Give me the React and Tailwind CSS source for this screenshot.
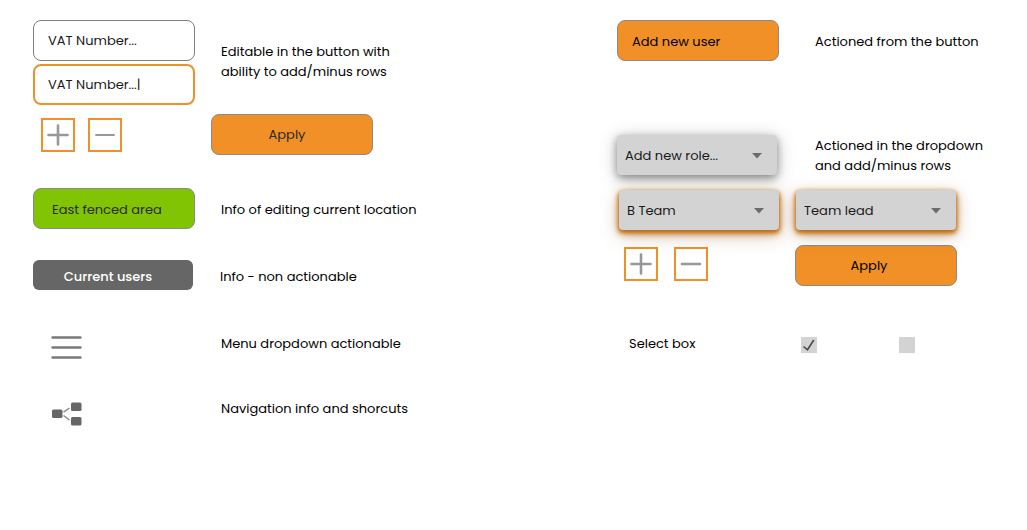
import React from "react";

const field =
  "block h-[41px] w-[162px] rounded-lg bg-white text-[13px] text-[#1a1a1a] outline-none";
const outlined =
  "h-[41px] w-[162px] shrink-0 rounded-lg border border-[#8a8a8a] text-[13px]";

function Note({ children, className = "" }) {
  return (
    <p className={"text-[13px] leading-5 text-black " + className}>{children}</p>
  );
}

function RowButton({ minus = false, thin = false }) {
  return (
    <button
      type="button"
      aria-label={minus ? "Remove row" : "Add row"}
      className="flex size-[34px] shrink-0 items-center justify-center border-2 border-[#f09026] bg-white"
    >
      <svg
        width="22"
        height="22"
        viewBox="0 0 22 22"
        stroke="#999797"
        strokeWidth={thin ? 1.8 : 2.6}
        strokeLinecap="round"
      >
        <path d={minus ? "M2 11H20" : "M1.5 11H20.5M11 1.5V20.5"} />
      </svg>
    </button>
  );
}

function Dropdown({ label, option, active = false }) {
  return (
    <div
      className={
        "relative h-10 w-40 shrink-0 rounded bg-[#d3d3d3] " +
        (active
          ? "shadow-[0_2px_4px_#b8690c,0_3px_7px_#cf7a1d,0_5px_18px_#8a5a2a66]"
          : "shadow-[0_3px_8px_#00000066,0_3px_20px_#00000033]")
      }
    >
      <select
        aria-label={label}
        className="size-full appearance-none rounded bg-transparent pt-0.5 pr-8 pl-2 text-[13px] text-[#1a1a1a] outline-none"
      >
        <option>{option}</option>
      </select>
      <svg
        className="pointer-events-none absolute top-[18px] right-[15px]"
        width="10"
        height="6"
        viewBox="0 0 10 6"
        fill="#6b6b6b"
      >
        <path d="M0 0H10L5 5.5Z" />
      </svg>
    </div>
  );
}

function CheckBox({ label, checked = false }) {
  return (
    <span className="relative block size-4">
      <input
        type="checkbox"
        aria-label={label}
        defaultChecked={checked}
        className="peer block size-4 appearance-none bg-[#d3d3d3]"
      />
      <svg
        className="pointer-events-none absolute inset-0 hidden peer-checked:block"
        width="16"
        height="16"
        viewBox="0 0 16 16"
        fill="none"
        stroke="#4a4a4a"
        strokeWidth="1.6"
      >
        <path d="M2.5 9.5L6.5 12.8L12.8 3" />
      </svg>
    </span>
  );
}

export default function App() {
  return (
    <main className="grid min-h-screen grid-cols-[584fr_377fr] bg-white px-[33px] py-5 font-['Poppins','Inter',sans-serif]">
      <section className="flex flex-col">
        <div className="flex items-center gap-[26px]">
          <div className="flex flex-col gap-[3px]">
            <input
              aria-label="VAT number"
              defaultValue="VAT Number..."
              className={field + " border border-[#808080] px-3.5"}
            />
            <input
              aria-label="VAT number, editing"
              defaultValue="VAT Number...|"
              className={field + " border-2 border-[#f09026] px-[13px]"}
            />
          </div>
          <Note className="pb-0.5">
            Editable in the button with
            <br />
            ability to add/minus rows
          </Note>
        </div>

        <div className="mt-[9px] flex items-center pl-2">
          <div className="flex gap-[13px]">
            <RowButton />
            <RowButton minus thin />
          </div>
          <button type="button" className={outlined + " ml-[89px] bg-[#f09026] pr-2.5 text-[#2b2b2b]"}>
            Apply
          </button>
        </div>

        <div className="mt-[33px] flex items-center gap-[26px]">
          <div className={outlined + " flex items-center bg-[#80c403] pt-0.5 pl-[18px] text-[#2b2b2b]"}>
            East fenced area
          </div>
          <Note className="pt-0.5">Info of editing current location</Note>
        </div>

        <div className="mt-[31px] flex items-center gap-[27px]">
          <div className="flex h-[30px] w-40 items-center justify-center rounded-md bg-[#666666] pt-[3px] pr-2.5 text-[13px] font-medium text-white">
            Current users
          </div>
          <Note className="pt-[3px]">Info - non actionable</Note>
        </div>

        <div className="mt-11 flex items-start">
          <div className="w-[188px] pt-0.5 pl-[18px]">
            <button type="button" aria-label="Menu" className="block">
              <svg width="31" height="24" viewBox="0 0 31 24" stroke="#7a7a7a" strokeWidth="2.4" strokeLinecap="round">
                <path d="M1.5 1.5H29.5M1.5 11.5H29.5M1.5 21.5H29.5" />
              </svg>
            </button>
          </div>
          <Note>Menu dropdown actionable</Note>
        </div>

        <div className="mt-[39px] flex items-start">
          <div className="w-[188px] pt-[3px] pl-[18px]">
            <button type="button" aria-label="Navigation" className="block">
              <svg width="31" height="24" viewBox="0 0 31 24" fill="#666666">
                <path d="M12.5 10.2L18.5 6M12.5 13.5L18.5 18" stroke="#8a8a8a" strokeWidth="1.5" />
                <rect x="1" y="7.5" width="10.5" height="8.5" rx="1.5" />
                <rect x="20" y="0.5" width="10.5" height="8.5" rx="1.5" />
                <rect x="20" y="15" width="10.5" height="8.5" rx="1.5" />
              </svg>
            </button>
          </div>
          <Note>Navigation info and shorcuts</Note>
        </div>
      </section>

      <section className="flex flex-col">
        <div className="flex items-center gap-9 whitespace-nowrap">
          <button type="button" className={outlined + " bg-[#f09026] pt-0.5 pl-3.5 text-left text-black"}>
            Add new user
          </button>
          <Note className="pt-0.5">Actioned from the button</Note>
        </div>

        <div className="mt-[73px] flex items-center gap-[38px] whitespace-nowrap">
          <Dropdown label="Role" option="Add new role..." />
          <Note className="pt-0.5">
            Actioned in the dropdown
            <br />
            and add/minus rows
          </Note>
        </div>

        <div className="mt-[14px] flex gap-[17px] pl-0.5">
          <Dropdown label="Team" option="B Team" active />
          <Dropdown label="Position" option="Team lead" active />
        </div>

        <div className="mt-[15px] flex items-start pl-[7px]">
          <div className="flex gap-4 pt-0.5">
            <RowButton />
            <RowButton minus />
          </div>
          <button type="button" className={outlined + " ml-[87px] bg-[#f09026] pr-3.5 text-black"}>
            Apply
          </button>
        </div>

        <div className="mt-12 flex items-center pl-3">
          <Note className="w-[172px]">Select box</Note>
          <div className="flex gap-[82px] pt-0.5">
            <CheckBox label="Select box, on" checked />
            <CheckBox label="Select box, off" />
          </div>
        </div>
      </section>
    </main>
  );
}
